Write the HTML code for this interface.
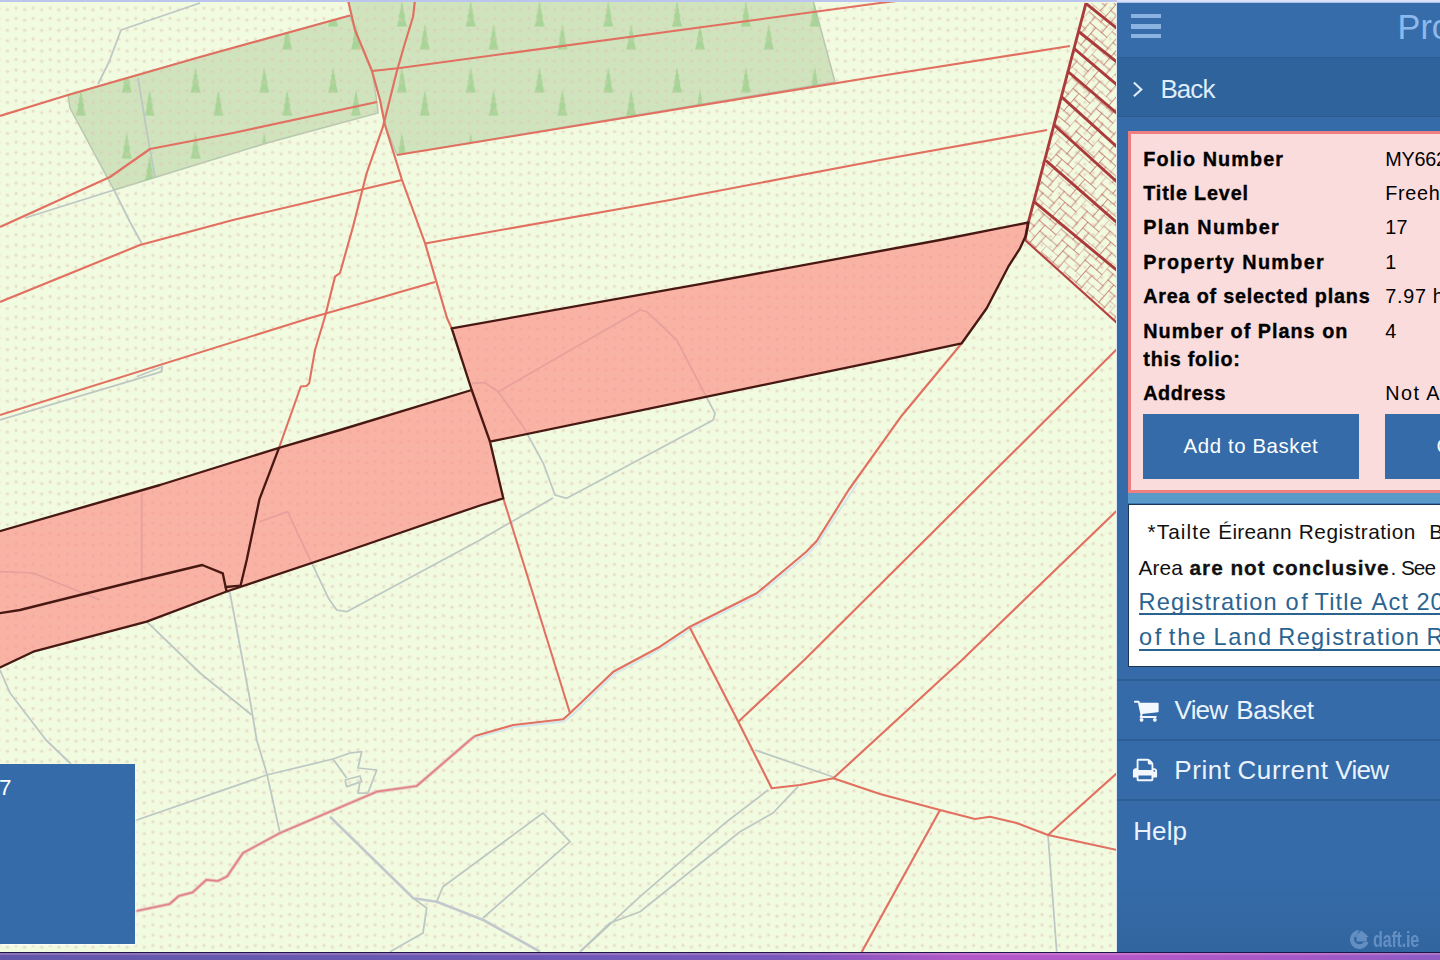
<!DOCTYPE html>
<html lang="en"><head><meta charset="utf-8"><title>Property map</title>
<style>
*{box-sizing:border-box}
html,body{margin:0;padding:0}
body{width:1440px;height:960px;overflow:hidden;position:relative;background:#f1fbe0;font-family:"Liberation Sans",sans-serif}
.map{position:absolute;left:0;top:0;display:block}
.t{position:absolute;white-space:nowrap;display:block}
.abs{position:absolute}
.topstrip{left:0;top:0;width:1117px;height:2.3px;background:#bcc5f0}
.topstrip2{left:1117px;top:0;width:323px;height:3px;background:linear-gradient(#dfe6fb,#cfdcf6 70%,#7d9fd0)}
.botstrip{left:0;top:951.7px;width:1440px;height:9px;background:linear-gradient(90deg,#6157a9 0%,#6a58b3 32%,#7a58bc 55%,#b258c8 67%,#b458c8 78%,#a658c6 90%,#8c5cc3 100%);border-top:1.7px solid #1f1648;box-shadow:inset 0 2px 1px rgba(255,190,230,.28)}
.legend{left:0;top:764px;width:135px;height:179.5px;background:#346ba8;box-shadow:1.5px 1.5px 0 rgba(255,255,255,.7)}
.side{left:1116px;top:3px;width:324px;height:949px;background:linear-gradient(#346ba8 0,#346ba8 880px,#31659f 949px);border-left:1px solid #dfe8ee}
.hdr{left:1117px;top:3px;width:323px;height:54.5px;background:#356ca9}
.burger{left:1130.8px;width:30px;height:4.6px;background:#8ab3e2}
.back{left:1117px;top:57px;width:323px;height:60.3px;background:#2f639b;border-top:1.2px solid #2c5d94;border-bottom:1.5px solid #2b5b90}
.panel{left:1128.3px;top:130.6px;width:330px;height:362.8px;background:#fbdcdc;border:3px solid #ee7f80;box-shadow:0 10.2px 0 #5a9ac8}
.btn{top:413.5px;height:65px;background:#346ba8}
.note{left:1128.3px;top:503.6px;width:330px;height:163.6px;background:#fff;border:1.6px solid #1c3557}
.ul{height:1.9px;background:#2b6390}
.sep{left:1117px;width:323px;height:1.6px;background:#2c5e98}
.wm{left:1372.5px;top:926.5px;color:#7ea4d4;font-size:22px;font-weight:bold;line-height:25px;white-space:nowrap;transform-origin:0 0;transform:scaleX(.735);opacity:.66;letter-spacing:-.3px}
</style></head><body>
<svg class="map" style="filter:blur(.5px)" width="1117" height="952" viewBox="0 0 1117 952">
<defs>
<pattern id="dots" width="17.1" height="10.3" patternUnits="userSpaceOnUse" x="7.5" y="7.6"><g fill="#f5c4ba" opacity=".15"><circle cx="0" cy="2.2" r="2.4"/><circle cx="17.1" cy="2.2" r="2.4"/><circle cx="8.55" cy="0.5" r="2.4"/><circle cx="8.55" cy="10.8" r="2.4"/></g><g fill="#d2c5b0" opacity=".5"><circle cx="0" cy="2.2" r="1.3"/><circle cx="17.1" cy="2.2" r="1.3"/><circle cx="8.55" cy="0.5" r="1.3"/><circle cx="8.55" cy="10.8" r="1.3"/></g></pattern>
<pattern id="trees" width="68.8" height="66" patternUnits="userSpaceOnUse" x="47.9" y="1.6"><path d="M0,-13 L1.2,-8 L0.6,-8 L2.4,-3 L1.4,-3 L3.6,3 L2.4,3 L5,12.5 L-5,12.5 L-2.4,3 L-3.6,3 L-1.4,-3 L-2.4,-3 L-0.6,-8 L-1.2,-8 Z" transform="translate(10,12.5)" fill="#8fcc80" opacity=".62"/><path d="M0,-13 L1.2,-8 L0.6,-8 L2.4,-3 L1.4,-3 L3.6,3 L2.4,3 L5,12.5 L-5,12.5 L-2.4,3 L-3.6,3 L-1.4,-3 L-2.4,-3 L-0.6,-8 L-1.2,-8 Z" transform="translate(32.9,35.5)" fill="#8fcc80" opacity=".62"/></pattern>
<pattern id="herr" width="30.4" height="30.4" patternUnits="userSpaceOnUse" patternTransform="rotate(41 1086 3)"><path d="M0,7.6H7.6M15.2,0V7.6M7.6,7.6H15.2M22.8,0V7.6M15.2,7.6H22.8M30.4,0V7.6M7.6,7.6V15.2M7.6,15.2H15.2M22.8,7.6V15.2M15.2,15.2H22.8M30.4,7.6V15.2M22.8,15.2H30.4M7.6,15.2V22.8M0,22.8H7.6M15.2,15.2V22.8M15.2,22.8H22.8M30.4,15.2V22.8M22.8,22.8H30.4M7.6,22.8V30.4M0,30.4H7.6M15.2,22.8V30.4M7.6,30.4H15.2M22.8,22.8V30.4M22.8,30.4H30.4" stroke="#bf6f66" stroke-width=".95" fill="none" opacity=".8" stroke-linecap="square"/></pattern>
<clipPath id="hclip"><path d="M1086,3 L1117,3 L1117,323 L1025,240 L1028.3,222.5Z"/></clipPath>
</defs>
<rect width="1117" height="952" fill="#f1fbe0"/>
<path d="M68,95 L200,57 L350,15.5 L355,30 L372,71 L377,102 L378,113 L267,143 L114,190 L70,108Z" fill="#cfe3bd" stroke="#b7c7b0" stroke-width="1.5"/>
<path d="M348,0 L813,0 L835,82 L397,155 L385,125 L380,100 L372,71 L355,30Z" fill="#cfe3bd" stroke="#b7c7b0" stroke-width="1.5"/>
<path d="M68,95 L200,57 L350,15.5 L355,30 L372,71 L377,102 L378,113 L267,143 L114,190 L70,108Z M348,0 L813,0 L835,82 L397,155 L385,125 L380,100 L372,71 L355,30Z" fill="url(#trees)"/>
<rect width="1117" height="952" fill="url(#dots)"/>
<path d="M200,3 L121,30 L109,62 L98,84" fill="none" stroke="#bdc7c3" stroke-width="1.75" stroke-linejoin="round"/>
<path d="M114,190 L130,222 L142,244" fill="none" stroke="#bdc7c3" stroke-width="1.75" stroke-linejoin="round"/>
<path d="M25,218 L114,190" fill="none" stroke="#bdc7c3" stroke-width="1.75" stroke-linejoin="round"/>
<path d="M138,78 L147,133 L155,177" fill="none" stroke="#bdc7c3" stroke-width="1.75" stroke-linejoin="round"/>
<path d="M0,420 L161.7,371.7 L162.3,366.7 L136.7,376.7" fill="none" stroke="#bdc7c3" stroke-width="1.75" stroke-linejoin="round"/>
<path d="M141.7,493.3 L141.7,580" fill="none" stroke="#bdc7c3" stroke-width="1.75" stroke-linejoin="round"/>
<path d="M0,571.7 L33,573 L83,593 L100,600" fill="none" stroke="#bdc7c3" stroke-width="1.75" stroke-linejoin="round"/>
<path d="M259.4,521.9 L287.5,511.6 L310,559.4 L328.8,598.8 L336.7,610 L346.7,611.7 L480,540 L553,498" fill="none" stroke="#bdc7c3" stroke-width="1.75" stroke-linejoin="round"/>
<path d="M226.7,591.7 L230,593 L250,700 L256.7,740 L266.7,773 L280,833" fill="none" stroke="#bdc7c3" stroke-width="1.75" stroke-linejoin="round"/>
<path d="M146.7,621.7 L200,673 L251.7,715" fill="none" stroke="#bdc7c3" stroke-width="1.75" stroke-linejoin="round"/>
<path d="M0,670 L10,693 L46,740 L71,764" fill="none" stroke="#bdc7c3" stroke-width="1.75" stroke-linejoin="round"/>
<path d="M134,821 L266.7,775 L333,759 L350,753 L361.7,751.7 L358,768 L376.7,770 L368,793 L358,793 L360,781.7" fill="none" stroke="#bdc7c3" stroke-width="1.75" stroke-linejoin="round"/>
<path d="M345,780 L360,776 L361.7,781.7 L346.7,786.7 L345,780" fill="none" stroke="#bdc7c3" stroke-width="1.75" stroke-linejoin="round"/>
<path d="M333,759 L346.7,778" fill="none" stroke="#bdc7c3" stroke-width="1.75" stroke-linejoin="round"/>
<path d="M471.7,383.3 L485,382.7 L498.3,391.7 L640,310 L646.7,311.7 L676.7,340 L715,413.3 L713.3,420 L566.7,498.3 L555,495 L543.3,463.3 L523.3,426.7 L498.3,391.7" fill="none" stroke="#bdc7c3" stroke-width="1.75" stroke-linejoin="round"/>
<path d="M755,750 L833.3,777" fill="none" stroke="#bdc7c3" stroke-width="1.75" stroke-linejoin="round"/>
<path d="M768,790 L726.7,821.7 L640,896.7 L581,951" fill="none" stroke="#bdc7c3" stroke-width="1.75" stroke-linejoin="round"/>
<path d="M798,786.7 L773,813 L740,831.7 L640,911.7 L610,923 L580,951.7" fill="none" stroke="#bdc7c3" stroke-width="1.75" stroke-linejoin="round"/>
<path d="M1048,835 L1056.7,951.7" fill="none" stroke="#bdc7c3" stroke-width="1.75" stroke-linejoin="round"/>
<path d="M413.3,898.3 L426.7,908 L423,933 L390,951.7" fill="none" stroke="#bdc7c3" stroke-width="1.75" stroke-linejoin="round"/>
<path d="M436.7,901.7 L443,886.7 L543,813 L570,841.7 L483,918" fill="none" stroke="#bdc7c3" stroke-width="1.75" stroke-linejoin="round"/>
<path d="M330,816.7 L413.3,898.3 L436.7,901.7 L483.3,920 L540,951.7" fill="none" stroke="#c2c8cc" stroke-width="2.6" stroke-linejoin="round"/>
<path d="M-3,532 L160,485 L279,447.8 L340,430 L471.7,390 L451.7,328.3 L700,284.2 L940,240 L1028.3,222.5 L1025.8,235.8 L1020,248.3 L1008.3,266.7 L986.7,308.3 L961.7,343.3 L900,356.7 L760,385.6 L490,441.7 L503.3,498.3 L480,505.5 L340,553.5 L226.7,591.5 L146.7,621.7 L33.3,651.7 L-3,669Z" fill="rgb(254,140,134)" fill-opacity=".65"/>
<path d="M858,482 L818,543 L808,554 L758,595.5 L691,629 L661,649 L614.5,674 L572,715.5 L564,721.5 L514,727 L476,738" fill="none" stroke="#d3e6ec" stroke-width="1.8" stroke-linejoin="round"/>
<path d="M475,736 L470,740 L416.7,786 L376.7,791.7 L280,833 L243,853 L227,876.4 L217.8,881 L206.3,879.8 L192.6,892.4 L178.8,896 L169.6,904 L134,911.5" fill="none" stroke="#e8c6c2" stroke-width="3.5" stroke-linejoin="round"/>
<path d="M475,736 L470,740 L416.7,786 L376.7,791.7 L280,833 L243,853 L227,876.4 L217.8,881 L206.3,879.8 L192.6,892.4 L178.8,896 L169.6,904 L134,911.5" fill="none" stroke="#e18381" stroke-width="1.7" stroke-linejoin="round"/>
<path d="M0,116 L68,95 L200,57 L350,15.5" fill="none" stroke="#e17060" stroke-width="2.15" stroke-linejoin="round"/>
<path d="M348,0 L355,30 L372,71 L380,100 L385,125 L402,180 L425,243 L447,318 L451.7,328.3" fill="none" stroke="#e17060" stroke-width="2.15" stroke-linejoin="round"/>
<path d="M415,0 L413,17 L405,43 L396.7,71.7 L383,126.7 L366.7,173 L353,226.7 L340,273 L335,276.7 L325,316.7" fill="none" stroke="#e17060" stroke-width="2.15" stroke-linejoin="round"/>
<path d="M0,227 L110,177 L150,149 L233,133 L377,102" fill="none" stroke="#e17060" stroke-width="2.15" stroke-linejoin="round"/>
<path d="M0,302 L140,245 L233,220 L402,180" fill="none" stroke="#e17060" stroke-width="2.15" stroke-linejoin="round"/>
<path d="M503.3,498.3 L570,713.3" fill="none" stroke="#e17060" stroke-width="2.05" stroke-linejoin="round"/>
<path d="M372,71 L400,68 L880,3 L905,0" fill="none" stroke="#e17060" stroke-width="2.05" stroke-linejoin="round"/>
<path d="M397,155 L880,76 L1070,46" fill="none" stroke="#e17060" stroke-width="2.05" stroke-linejoin="round"/>
<path d="M425,243.5 L670,200 L880,160 L1047,130" fill="none" stroke="#e17060" stroke-width="2.05" stroke-linejoin="round"/>
<path d="M1117,349 L804.3,660 L738.3,721.7" fill="none" stroke="#e17060" stroke-width="2.15" stroke-linejoin="round"/>
<path d="M1117,510.4 L962,660 L833.3,778.3" fill="none" stroke="#e17060" stroke-width="2.15" stroke-linejoin="round"/>
<path d="M690,628 L738.3,721.7 L771.7,788.3 L800,785 L833.3,778.3 L880,794 L940,810 L975,819 L990,816.7 L1016.7,823 L1048,835 L1117,850" fill="none" stroke="#e17060" stroke-width="2.15" stroke-linejoin="round"/>
<path d="M940,810 L861.7,952" fill="none" stroke="#e17060" stroke-width="2.15" stroke-linejoin="round"/>
<path d="M1117,773 L1048,835" fill="none" stroke="#e17060" stroke-width="2.15" stroke-linejoin="round"/>
<path d="M962,343 L901.7,415.7 L848.6,490 L816.7,541 L806,552 L756.7,593.3 L690,626.7 L660,646.7 L613.3,671.7 L570,713.3 L563.3,719.3 L513.3,725 L475,736" fill="none" stroke="#e17060" stroke-width="2.15" stroke-linejoin="round"/>
<path d="M435,282 L400,292 L373,300 L310,318 L0,415" fill="none" stroke="#e17060" stroke-width="2.05" stroke-linejoin="round"/>
<path d="M325,316.7 L315,350 L309.2,383.3 L306.5,386 L300.8,386.5 L279,447.8" fill="none" stroke="#e17060" stroke-width="2.05" stroke-linejoin="round"/>
<g clip-path="url(#hclip)"><path d="M1086,3 L1117,3 L1117,323 L1025,240 L1028.3,222.5Z" fill="url(#herr)"/>
<path d="M1086,3.5 L1117,28.3" stroke="#ab3a3b" stroke-width="2.9" fill="none"/>
<path d="M1078,31 L1117,62" stroke="#ab3a3b" stroke-width="2.9" fill="none"/>
<path d="M1073.5,48 L1117,85" stroke="#ab3a3b" stroke-width="2.9" fill="none"/>
<path d="M1067.3,71 L1117,113.4" stroke="#ab3a3b" stroke-width="2.9" fill="none"/>
<path d="M1060.2,95.6 L1117,147" stroke="#ab3a3b" stroke-width="2.9" fill="none"/>
<path d="M1053,124 L1117,182" stroke="#ab3a3b" stroke-width="2.9" fill="none"/>
<path d="M1046,160.6 L1117,222.6" stroke="#ab3a3b" stroke-width="2.9" fill="none"/>
<path d="M1033.7,201.4 L1117,270.4" stroke="#ab3a3b" stroke-width="2.9" fill="none"/>
</g>
<path d="M1086,3 L1028.3,222.5 L1025,240" fill="none" stroke="#ab3a3b" stroke-width="2.9" stroke-linejoin="miter"/>
<path d="M1025,240 L1117,323" fill="none" stroke="#b5413f" stroke-width="2.1"/>
<path d="M-3,532 L160,485 L279,447.8 L340,430 L471.7,390 L451.7,328.3 L700,284.2 L940,240 L1028.3,222.5 L1025.8,235.8 L1020,248.3 L1008.3,266.7 L986.7,308.3 L961.7,343.3 L900,356.7 L760,385.6 L490,441.7 L503.3,498.3 L480,505.5 L340,553.5 L226.7,591.5 L146.7,621.7 L33.3,651.7 L-3,669Z" fill="none" stroke="#481813" stroke-width="2.35" stroke-linejoin="round"/>
<path d="M471.7,390 L490,441.7" fill="none" stroke="#481813" stroke-width="2.35"/>
<path d="M279,447.8 L259.4,499.4 L246.7,560 L240.6,585.6 L225.6,587 L222.8,573.4 L202.2,565 L140,580 L20,610 L-3,613.6" fill="none" stroke="#481813" stroke-width="2.35" stroke-linejoin="round"/>
<path d="M225.6,587 L226.7,592" fill="none" stroke="#481813" stroke-width="2.35"/>
</svg>
<div class="abs legend"></div>
<div class="abs side"></div>
<div class="abs hdr"></div>
<div class="abs burger" style="top:13.8px"></div><div class="abs burger" style="top:24.1px"></div><div class="abs burger" style="top:33.8px"></div>
<div class="abs back"></div>
<svg class="abs" style="left:1130px;top:79px" width="16" height="21" viewBox="0 0 16 21"><path d="M3.9,3.6 L11.3,10.4 L3.9,17.2" fill="none" stroke="#deecfb" stroke-width="2.1"/></svg>
<div class="abs panel"></div>
<div class="abs btn" style="left:1143.2px;width:216px"></div>
<div class="abs btn" style="left:1384.7px;width:216px"></div>
<div class="abs note"></div>
<div class="abs ul" style="left:1138.6px;top:613.3px;width:310px"></div>
<div class="abs ul" style="left:1138.6px;top:649.2px;width:310px"></div>
<div class="abs sep" style="top:679.3px"></div><div class="abs sep" style="top:739px"></div><div class="abs sep" style="top:799.2px"></div>
<svg class="abs" style="left:1133.2px;top:697.2px" width="26.6" height="26.6" viewBox="0 0 1792 1792"><path d="M704 1536q0 52-38 90t-90 38-90-38-38-90 38-90 90-38 90 38 38 90zm896 0q0 52-38 90t-90 38-90-38-38-90 38-90 90-38 90 38 38 90zm128-1088v512q0 24-16.500 42.500t-40.500 21.500l-1044 122q13 60 13 70 0 16-24 64h920q26 0 45 19t19 45-19 45-45 19h-1024q-26 0-45-19t-19-45q0-11 8-31.500t16-36 21.500-40 15.500-29.500l-177-823h-204q-26 0-45-19t-19-45 19-45 45-19h256q16 0 28.500 6.500t19.500 15.500 13 24.500 8 26 5.500 29.500 4.500 26h1201q26 0 45 19t19 45z" fill="#f3f8fe"/></svg>
<svg class="abs" style="left:1132.4px;top:757.2px" width="26" height="26" viewBox="0 0 1792 1792"><path d="M448 1536h896v-256h-896v256zm0-640h896v-384h-160q-40 0-68-28t-28-68v-160h-640v640zm1152 64q0-26-19-45t-45-19-45 19-19 45 19 45 45 19 45-19 19-45zm128 0v416q0 13-9.500 22.500t-22.500 9.500h-224v160q0 40-28 68t-68 28h-960q-40 0-68-28t-28-68v-160h-224q-13 0-22.500-9.500t-9.500-22.500v-416q0-79 56.500-135.500t135.500-56.500h64v-544q0-40 28-68t68-28h672q40 0 88 20t76 48l152 152q28 28 48 76t20 88v256h64q79 0 135.500 56.500t56.500 135.500z" fill="#f3f8fe"/></svg>
<svg class="abs" style="left:1348.5px;top:929px" width="21" height="21" viewBox="0 0 21 21" opacity=".66"><path d="M10.5,1 A9.5,9.5 0 1 0 19.6,13 L15,13 A5.6,5.6 0 0 1 5,10.5 A5.6,5.6 0 0 1 8,5.6 Z" fill="#7ea4d4"/><path d="M12.5,1.6 L19.8,8 L17.8,8 L17.8,12.5 L7.6,12.5 L7.6,8 L5.4,8 Z" fill="#7ea4d4"/></svg>
<div class="abs wm">daft.ie</div>
<span class="t" style="left:1397.5px;top:8.4px;font-size:34.3px;line-height:38.31px;color:#8cb9eb;">Property</span>
<span class="t" style="left:1160.5px;top:75.2px;font-size:26px;line-height:29.04px;color:#deecfb;letter-spacing:-0.97px;">Back</span>
<span class="t" style="left:1143.3px;top:147.9px;font-size:19.8px;line-height:22.12px;color:#000;font-weight:bold;letter-spacing:1.11px;-webkit-text-stroke:.35px #000;">Folio Number</span>
<span class="t" style="left:1143.3px;top:182.1px;font-size:19.8px;line-height:22.12px;color:#000;font-weight:bold;letter-spacing:0.83px;-webkit-text-stroke:.35px #000;">Title Level</span>
<span class="t" style="left:1143.3px;top:216.3px;font-size:19.8px;line-height:22.12px;color:#000;font-weight:bold;letter-spacing:1.35px;-webkit-text-stroke:.35px #000;">Plan Number</span>
<span class="t" style="left:1143.3px;top:250.9px;font-size:19.8px;line-height:22.12px;color:#000;font-weight:bold;letter-spacing:1.35px;-webkit-text-stroke:.35px #000;">Property Number</span>
<span class="t" style="left:1143.3px;top:285.3px;font-size:19.8px;line-height:22.12px;color:#000;font-weight:bold;letter-spacing:0.78px;-webkit-text-stroke:.35px #000;">Area of selected plans</span>
<span class="t" style="left:1143.3px;top:319.7px;font-size:19.8px;line-height:22.12px;color:#000;font-weight:bold;letter-spacing:1.01px;-webkit-text-stroke:.35px #000;">Number of Plans on</span>
<span class="t" style="left:1143.3px;top:347.8px;font-size:19.8px;line-height:22.12px;color:#000;font-weight:bold;letter-spacing:0.76px;-webkit-text-stroke:.35px #000;">this folio:</span>
<span class="t" style="left:1143.3px;top:382.0px;font-size:19.8px;line-height:22.12px;color:#000;font-weight:bold;letter-spacing:0.51px;-webkit-text-stroke:.35px #000;">Address</span>
<span class="t" style="left:1385.3px;top:147.9px;font-size:19.8px;line-height:22.12px;color:#000;letter-spacing:-0.26px;">MY66231F</span>
<span class="t" style="left:1385.3px;top:182.1px;font-size:19.8px;line-height:22.12px;color:#000;letter-spacing:0.70px;">Freehold</span>
<span class="t" style="left:1385.3px;top:216.3px;font-size:19.8px;line-height:22.12px;color:#000;letter-spacing:0.25px;">17</span>
<span class="t" style="left:1385.3px;top:250.9px;font-size:19.8px;line-height:22.12px;color:#000;letter-spacing:0.25px;">1</span>
<span class="t" style="left:1385.3px;top:285.3px;font-size:19.8px;line-height:22.12px;color:#000;letter-spacing:0.70px;">7.97 hectares</span>
<span class="t" style="left:1385.3px;top:319.7px;font-size:19.8px;line-height:22.12px;color:#000;letter-spacing:0.25px;">4</span>
<span class="t" style="left:1385.3px;top:382.0px;font-size:19.8px;line-height:22.12px;color:#000;letter-spacing:1.47px;">Not Available</span>
<span class="t" style="left:1183.5px;top:435.2px;font-size:20.4px;line-height:22.79px;color:#fff;letter-spacing:0.61px;">Add to Basket</span>
<span class="t" style="left:1436.5px;top:435.2px;font-size:20.4px;line-height:22.79px;color:#fff;letter-spacing:0.50px;">Clear Search</span>
<span class="t" style="left:1147.6px;top:520.4px;font-size:20.8px;line-height:23.23px;color:#111;letter-spacing:1.07px;">*Tailte</span>
<span class="t" style="left:1218.3px;top:520.4px;font-size:20.8px;line-height:23.23px;color:#111;letter-spacing:0.25px;">Éireann</span>
<span class="t" style="left:1298.8px;top:520.4px;font-size:20.8px;line-height:23.23px;color:#111;letter-spacing:0.50px;">Registration</span>
<span class="t" style="left:1429.3px;top:520.4px;font-size:20.8px;line-height:23.23px;color:#111;letter-spacing:0.50px;">Boundaries</span>
<span class="t" style="left:1553.0px;top:520.4px;font-size:20.8px;line-height:23.23px;color:#111;letter-spacing:0.50px;">and</span>
<span class="t" style="left:1138.4px;top:555.9px;font-size:20.8px;line-height:23.23px;color:#111;letter-spacing:0.19px;">Area</span>
<span class="t" style="left:1189.6px;top:555.9px;font-size:20.8px;line-height:23.23px;color:#111;font-weight:bold;letter-spacing:0.96px;-webkit-text-stroke:.3px #111;">are not conclusive</span>
<span class="t" style="left:1390.6px;top:555.9px;font-size:20.8px;line-height:23.23px;color:#111;">.</span>
<span class="t" style="left:1400.9px;top:555.9px;font-size:20.8px;line-height:23.23px;color:#111;letter-spacing:-0.96px;">See</span>
<span class="t" style="left:1446.0px;top:555.9px;font-size:20.8px;line-height:23.23px;color:#111;">Section 85 of the</span>
<span class="t" style="left:1138.6px;top:588.8px;font-size:23.6px;line-height:26.36px;color:#2b6390;letter-spacing:1.10px;">Registration</span>
<span class="t" style="left:1285.4px;top:588.8px;font-size:23.6px;line-height:26.36px;color:#2b6390;letter-spacing:2.71px;">of</span>
<span class="t" style="left:1314.6px;top:588.8px;font-size:23.6px;line-height:26.36px;color:#2b6390;letter-spacing:1.10px;">Title</span>
<span class="t" style="left:1371.5px;top:588.8px;font-size:23.6px;line-height:26.36px;color:#2b6390;letter-spacing:1.20px;">Act</span>
<span class="t" style="left:1416.4px;top:588.8px;font-size:23.6px;line-height:26.36px;color:#2b6390;letter-spacing:1.00px;">2006 and Rule 8</span>
<span class="t" style="left:1139.0px;top:624.4px;font-size:23.6px;line-height:26.36px;color:#2b6390;letter-spacing:2.51px;">of</span>
<span class="t" style="left:1168.8px;top:624.4px;font-size:23.6px;line-height:26.36px;color:#2b6390;letter-spacing:1.94px;">the</span>
<span class="t" style="left:1213.5px;top:624.4px;font-size:23.6px;line-height:26.36px;color:#2b6390;letter-spacing:1.73px;">Land</span>
<span class="t" style="left:1278.3px;top:624.4px;font-size:23.6px;line-height:26.36px;color:#2b6390;letter-spacing:1.33px;">Registration</span>
<span class="t" style="left:1426.5px;top:624.4px;font-size:23.6px;line-height:26.36px;color:#2b6390;letter-spacing:1.00px;">Rules 2012</span>
<span class="t" style="left:1174.6px;top:696.0px;font-size:26px;line-height:29.04px;color:#eaf3fd;letter-spacing:-0.83px;">View</span>
<span class="t" style="left:1236.3px;top:696.0px;font-size:26px;line-height:29.04px;color:#eaf3fd;letter-spacing:-0.36px;">Basket</span>
<span class="t" style="left:1174.2px;top:755.9px;font-size:26px;line-height:29.04px;color:#eaf3fd;letter-spacing:0.63px;">Print</span>
<span class="t" style="left:1237.4px;top:755.9px;font-size:26px;line-height:29.04px;color:#eaf3fd;letter-spacing:0.65px;">Current</span>
<span class="t" style="left:1335.2px;top:755.9px;font-size:26px;line-height:29.04px;color:#eaf3fd;letter-spacing:-0.66px;">View</span>
<span class="t" style="left:1133.2px;top:816.5px;font-size:26px;line-height:29.04px;color:#eaf3fd;letter-spacing:0.11px;">Help</span>
<span class="t" style="left:-1.0px;top:774.6px;font-size:22.5px;line-height:25.13px;color:#fff;">7</span>
<div class="abs topstrip"></div><div class="abs topstrip2"></div>
<div class="abs botstrip"></div>
</body></html>
